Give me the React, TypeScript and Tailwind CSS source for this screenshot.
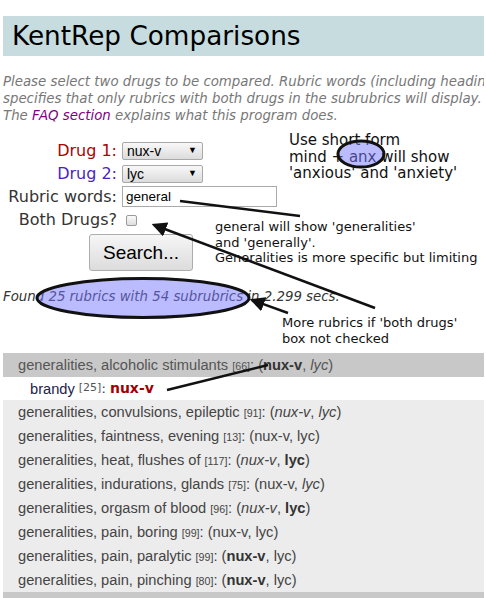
import React from "react";

const rows: { name: string; num: string; a: "n" | "i" | "b"; b: "n" | "i" | "b" }[] = [
  { name: "generalities, convulsions, epileptic", num: "91", a: "i", b: "i" },
  { name: "generalities, faintness, evening", num: "13", a: "n", b: "n" },
  { name: "generalities, heat, flushes of", num: "117", a: "i", b: "b" },
  { name: "generalities, indurations, glands", num: "75", a: "n", b: "i" },
  { name: "generalities, orgasm of blood", num: "96", a: "i", b: "b" },
  { name: "generalities, pain, boring", num: "99", a: "n", b: "n" },
  { name: "generalities, pain, paralytic", num: "99", a: "b", b: "n" },
  { name: "generalities, pain, pinching", num: "80", a: "b", b: "n" },
];

function Drug({ t, s }: { t: string; s: "n" | "i" | "b" }) {
  if (s === "i") return <span className="italic">{t}</span>;
  if (s === "b") return <span className="font-bold text-[#333]">{t}</span>;
  return <span>{t}</span>;
}

function Select({ v }: { v: string }) {
  return (
    <div className="w-[81px] h-[18px] border border-[#a9a9a9] rounded-[2px] bg-gradient-to-b from-[#f8f8f8] to-[#dcdcdc] flex items-center justify-between pl-[4px] pr-[5px] font-['Liberation_Sans',sans-serif] text-[14px] text-black leading-none">
      <span>{v}</span>
      <span className="text-[9px]">▼</span>
    </div>
  );
}

export default function App() {
  return (
    <div className="relative w-[486px] h-[598px] overflow-hidden bg-white font-['DejaVu_Sans',sans-serif]">
      <div className="px-[3px] pr-[2px] pt-[16px]">
        <h1 className="h-[40px] bg-[#c6dcdf] pl-[9px] flex items-center text-[26.3px] text-black font-normal leading-none">
          KentRep Comparisons
        </h1>
        <div className="mt-[17px] italic text-[13.33px] leading-[17px] text-[#777] whitespace-nowrap overflow-hidden">
          <div>Please select two drugs to be compared. Rubric words (including headings) are optional.</div>
          <div>specifies that only rubrics with both drugs in the subrubrics will display. More rubrics</div>
          <div>
            The <span className="text-[#800080]">FAQ section</span> explains what this program does.
          </div>
        </div>

        <div className="mt-[15px] flex flex-col text-[16px] leading-none">
          <div className="h-[23px] flex items-center">
            <div className="w-[114px] text-right text-[#b00000]">Drug 1:</div>
            <div className="ml-[5px]">
              <Select v="nux-v" />
            </div>
          </div>
          <div className="h-[23px] flex items-center">
            <div className="w-[114px] text-right text-[#4a1fc0]">Drug 2:</div>
            <div className="ml-[5px]">
              <Select v="lyc" />
            </div>
          </div>
          <div className="h-[23px] flex items-center">
            <div className="w-[114px] text-right text-[#333]">Rubric words:</div>
            <div className="ml-[5px] w-[155px] h-[21px] border border-[#aaa] flex items-center pl-[3px] font-['Liberation_Sans',sans-serif] text-[13.5px] text-black">
              general
            </div>
          </div>
          <div className="h-[24px] flex items-center">
            <div className="w-[114px] text-right text-[#333]">Both Drugs?</div>
            <div className="ml-[9px] w-[11px] h-[11px] border border-[#9a9a9a] rounded-[2px] bg-gradient-to-b from-[#fafafa] to-[#dedede]" />
          </div>
          <div className="mt-[2px] ml-[86px] w-[104px] h-[37px] border border-[#adadad] rounded-[3px] bg-gradient-to-b from-[#f6f6f6] to-[#dcdcdc] flex items-center justify-center font-['Liberation_Sans',sans-serif] text-[19px] text-black">
            Search...
          </div>
        </div>

        <div className="mt-[17px] italic text-[13.33px] leading-[17px] text-[#333] whitespace-nowrap">
          Found 25 rubrics with 54 subrubrics in 2.299 secs.
        </div>

        <div className="mt-[48px] font-['Liberation_Sans',sans-serif] text-[14.67px] text-[#444]">
          <div className="h-[24px] bg-[#c8c8c8] flex items-center pl-[15px] text-[#555]">
            <span>
              generalities, alcoholic stimulants <span className="text-[10.67px]">[66]</span>: (
              <span className="font-bold text-[#333]">nux-v</span>, <span className="italic">lyc</span>)
            </span>
          </div>
          <div className="h-[23px] bg-white flex items-center pl-[27px]">
            <span className="text-[#22224a]">brandy</span>
            <span className="ml-[4px] font-['DejaVu_Sans',sans-serif] text-[11px] text-[#555]">[25]</span>
            <span className="font-['DejaVu_Sans',sans-serif] text-[13px] text-[#333]">:&nbsp;</span>
            <span className="font-['DejaVu_Sans',sans-serif] font-bold text-[14px] text-[#a00000]">nux-v</span>
          </div>
          <div className="bg-[#ececec]">
            {rows.map((r, i) => (
              <div key={i} className="h-[24px] flex items-center pl-[15px]">
                <span>
                  {r.name} <span className="text-[10.67px]">[{r.num}]</span>: (<Drug t="nux-v" s={r.a} />, <Drug t="lyc" s={r.b} />)
                </span>
              </div>
            ))}
          </div>
          <div className="h-[10px] bg-[#c8c8c8]" />
        </div>
      </div>

      <div className="absolute left-[289px] top-[132px] text-[15px] leading-[16.5px] text-[#111] whitespace-nowrap">
        <div>Use short form</div>
        <div>mind + anx will show</div>
        <div>'anxious' and 'anxiety'</div>
      </div>

      <div className="absolute left-[215px] top-[219px] text-[13px] leading-[15.5px] text-[#111] whitespace-nowrap">
        <div>general will show 'generalities'</div>
        <div>and 'generally'.</div>
        <div>Generalities is more specific but limiting</div>
      </div>

      <div className="absolute left-[282px] top-[315px] text-[13px] leading-[15.5px] text-[#111] whitespace-nowrap">
        <div>More rubrics if 'both drugs'</div>
        <div>box not checked</div>
      </div>

      <svg className="absolute left-0 top-0 pointer-events-none" width="486" height="598" viewBox="0 0 486 598">
        <defs>
          <marker id="ah" markerWidth="6" markerHeight="6" refX="5" refY="3" orient="auto" markerUnits="strokeWidth">
            <path d="M0,0 L6,3 L0,6 Z" fill="#111" />
          </marker>
        </defs>
        <ellipse cx="361" cy="154" rx="23" ry="13" fill="rgb(120,120,255)" fillOpacity="0.5" stroke="#111" strokeWidth="3" />
        <ellipse cx="143" cy="298" rx="106" ry="19.5" fill="rgb(120,120,255)" fillOpacity="0.5" stroke="#111" strokeWidth="3" />
        <line x1="180" y1="201" x2="300" y2="216" stroke="#111" strokeWidth="2.5" />
        <line x1="375" y1="308" x2="154" y2="225" stroke="#111" strokeWidth="2.5" markerEnd="url(#ah)" />
        <line x1="288" y1="313" x2="252" y2="300" stroke="#111" strokeWidth="2.5" markerEnd="url(#ah)" />
        <line x1="167" y1="390" x2="268" y2="365" stroke="#111" strokeWidth="2.5" />
      </svg>
    </div>
  );
}
